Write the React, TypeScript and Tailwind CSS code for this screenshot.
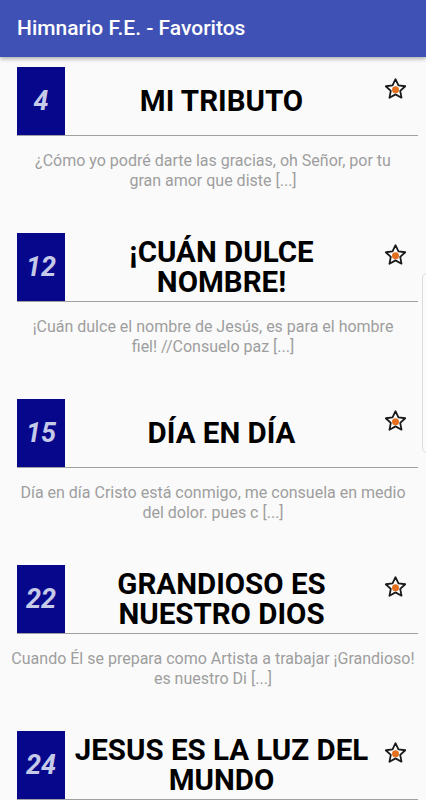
import React from "react";

const himnos = [
  { n: 4, titulo: "MI TRIBUTO", texto: "¿Cómo yo podré darte las gracias, oh Señor, por tu\ngran amor que diste [...]" },
  { n: 12, titulo: "¡CUÁN DULCE NOMBRE!", texto: "¡Cuán dulce el nombre de Jesús, es para el hombre\nfiel! //Consuelo paz [...]" },
  { n: 15, titulo: "DÍA EN DÍA", texto: "Día en día Cristo está conmigo, me consuela en medio\ndel dolor. pues c [...]" },
  { n: 22, titulo: "GRANDIOSO ES NUESTRO DIOS", texto: "Cuando Él se prepara como Artista a trabajar ¡Grandioso!\nes nuestro Di [...]" },
  { n: 24, titulo: "JESUS ES LA LUZ DEL MUNDO", texto: "Jesús es la luz del mundo, las tinieblas él disipa\n[...]" },
];

function Estrella() {
  return (
    <svg width="25" height="24" viewBox="0 0 24 24">
      <path
        d="M12 2.2l2.95 6.2 6.75.85-5 4.7 1.3 6.75L12 17.35l-6 3.35 1.3-6.75-5-4.7 6.75-.85z"
        fill="#fff"
        stroke="#1a1a1a"
        strokeWidth="1.8"
        strokeLinejoin="round"
      />
      <circle cx="12" cy="12.8" r="3.5" fill="#e46f1f" />
    </svg>
  );
}

export default function App() {
  return (
    <div className="relative h-[800px] w-[426px] overflow-hidden bg-[#fafafa] font-['Roboto',sans-serif]">
      <div className="relative z-10 flex h-[57px] items-center bg-[#3f51b5] px-[17px] shadow-[0_2px_4px_rgba(0,0,0,0.3)]">
        <span className="text-[21px] font-medium text-white">Himnario F.E. - Favoritos</span>
      </div>

      <div className="flex flex-col gap-[42px] pt-[10px]">
        {himnos.map((h) => (
          <div key={h.n} className="flex flex-col">
            <div className="ml-[17px] mr-[8px] flex h-[69px] border-b border-[#a0a0a0]">
              <div className="flex w-[48px] shrink-0 items-center justify-center bg-[#07078c]">
                <span className="text-[27px] font-bold italic text-[#c5cae9]">{h.n}</span>
              </div>
              <div className="flex flex-1 items-center justify-center text-center text-[29.5px] font-bold leading-[30px] text-black">
                {h.titulo}
              </div>
              <div className="flex w-[40px] shrink-0 justify-start pl-[5px] pt-[10px]">
                <Estrella />
              </div>
            </div>
            <p className="mt-[15px] whitespace-pre-line px-[8px] text-center text-[16px] leading-[20px] text-[#9e9e9e]">
              {h.texto}
            </p>
          </div>
        ))}
      </div>

      <div className="absolute left-[422px] top-[273px] h-[180px] w-[12px] rounded-[5px] border border-[#dcdcdc] bg-[#fcfcfc]" />
    </div>
  );
}
